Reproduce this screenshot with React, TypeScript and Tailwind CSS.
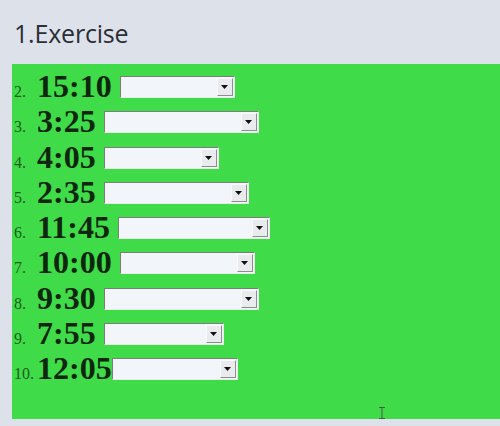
const rows = [
  { n: "2.", time: "15:10", w: 115, gap: true },
  { n: "3.", time: "3:25", w: 155, gap: true },
  { n: "4.", time: "4:05", w: 115, gap: true },
  { n: "5.", time: "2:35", w: 145, gap: true },
  { n: "6.", time: "11:45", w: 152, gap: true },
  { n: "7.", time: "10:00", w: 135, gap: true },
  { n: "8.", time: "9:30", w: 155, gap: true },
  { n: "9.", time: "7:55", w: 120, gap: true },
  { n: "10.", time: "12:05", w: 126, gap: false },
];

// old-style windows combo box, empty
const Dropdown = ({ width, gap }: { width: number; gap: boolean }) => (
  <div
    className={`${gap ? "ml-[8px]" : "ml-0"} mb-[-1px] h-[22px] flex items-stretch border border-t-[#7a8078] border-l-[#7a8078] border-r-[#e6ece6] border-b-[#e6ece6] bg-[#f2f5fa]`}
    style={{ width }}
  >
    <div className="flex-1" />
    <div className="m-[1px] w-[16px] flex items-center justify-center bg-[#e9ebee] border border-t-[#fafafa] border-l-[#fafafa] border-r-[#8a8f8a] border-b-[#8a8f8a]">
      <svg width="7" height="4" viewBox="0 0 7 4">
        <path d="M0 0h7L3.5 4z" fill="#111" />
      </svg>
    </div>
  </div>
);

export default function App() {
  return (
    <div className="w-[500px] h-[426px] bg-[#dde2ea] flex flex-col overflow-hidden">
      <div className="h-[64px] pl-[14px] pt-[17px]">
        <h1 className="text-[25px] leading-[32px] text-[#2b2e35] font-['Open_Sans',sans-serif] tracking-[-0.2px]">
          1.Exercise
        </h1>
      </div>
      <div className="relative ml-[12px] h-[355px] bg-[#3fdb48] pt-[5px] pl-[2px]">
        {rows.map((r) => (
          <div key={r.n} className="h-[35.25px] flex items-baseline">
            <span className="w-[23px] shrink-0 text-[16px] text-[#1f5c1f] font-['Liberation_Serif',serif]">
              {r.n}
            </span>
            <span className="text-[32px] leading-[34px] font-bold text-[#0d260d] font-['Liberation_Serif',serif]">
              {r.time}
            </span>
            <Dropdown width={r.w} gap={r.gap} />
          </div>
        ))}
        {/* mouse pointer resting near the bottom */}
        <svg className="absolute left-[366px] top-[343px]" width="8" height="12" viewBox="0 0 8 12">
          <path d="M1 0.5h6M4 0.5v11M1 11.5h6" stroke="#4a5a4a" strokeWidth="1" fill="none" />
        </svg>
      </div>
    </div>
  );
}
